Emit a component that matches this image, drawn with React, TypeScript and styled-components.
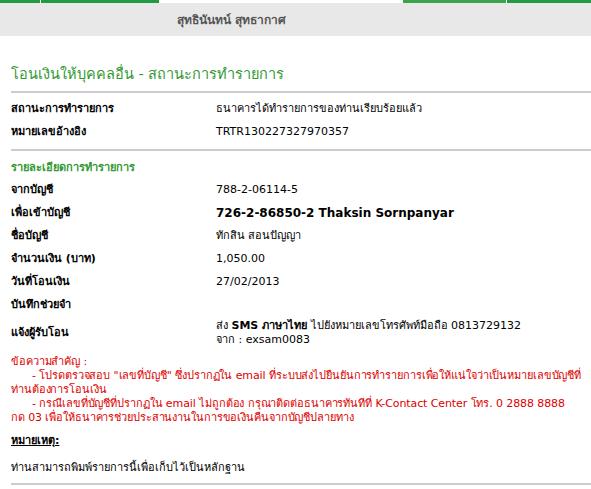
import React from 'react';
import styled, { createGlobalStyle } from 'styled-components';

const GlobalStyle = createGlobalStyle`
  html, body {
    margin: 0;
    padding: 0;
    background: #fff;
  }
  body {
    font-family: Tahoma, "DejaVu Sans", "Noto Sans", sans-serif;
    font-size: 11px;
    line-height: 14px;
    color: #000;
  }
`;

const TopStrip = styled.div`
  display: flex;
  height: 3px;
`;

const Seg = styled.div<{ $w: number; $color: string; $gap?: boolean }>`
  width: ${(p) => p.$w}px;
  flex: ${(p) => (p.$w ? 'none' : '1')};
  background: ${(p) => p.$color};
  margin-right: ${(p) => (p.$gap ? '1px' : '0')};
`;

const NameBar = styled.div`
  height: 33px;
  background: #e8e8e8;
  display: flex;
  align-items: center;
  padding-left: 177px;
  color: #555;
  font-weight: bold;
  font-size: 12px;
`;

const Content = styled.div`
  padding: 0 0 0 11px;
`;

const Heading = styled.h1`
  margin: 28px 0 0;
  color: #339933;
  font-size: 14.5px;
  font-weight: normal;
  line-height: 20px;
`;

const Rule = styled.hr<{ $top: number }>`
  border: none;
  height: 2px;
  background: #cccccc;
  margin: ${(p) => p.$top}px 0 0;
`;

const InfoGrid = styled.div<{ $top: number }>`
  display: grid;
  grid-template-columns: 205px 1fr;
  grid-auto-rows: minmax(23px, auto);
  align-items: center;
  padding-top: ${(p) => p.$top}px;
`;

const Label = styled.div`
  font-weight: bold;
`;

const Value = styled.div<{ $bold?: boolean }>`
  font-weight: ${(p) => (p.$bold ? 'bold' : 'normal')};
  font-size: ${(p) => (p.$bold ? '12px' : '11px')};
  line-height: 14px;
  padding: 3px 0;
`;

const SectionTitle = styled.div`
  color: #339933;
  font-weight: bold;
  margin-top: 9px;
  line-height: 16px;
`;

const Notice = styled.div`
  color: #dd0000;
  margin-top: 5px;
  letter-spacing: -0.1px;
`;

const Bullet = styled.div`
  text-indent: 21px;
`;

const NoteTitle = styled.div`
  margin-top: 9px;
  font-weight: bold;
  text-decoration: underline;
`;

const NoteText = styled.div`
  margin-top: 13px;
`;

const rows1 = [
  { label: 'สถานะการทำรายการ', value: 'ธนาคารได้ทำรายการของท่านเรียบร้อยแล้ว' },
  { label: 'หมายเลขอ้างอิง', value: 'TRTR130227327970357' },
];

const rows2: { label: string; value: React.ReactNode; bold?: boolean }[] = [
  { label: 'จากบัญชี', value: '788-2-06114-5' },
  { label: 'เพื่อเข้าบัญชี', value: '726-2-86850-2 Thaksin Sornpanyar', bold: true },
  { label: 'ชื่อบัญชี', value: 'ทักสิน สอนปัญญา' },
  { label: 'จำนวนเงิน (บาท)', value: '1,050.00' },
  { label: 'วันที่โอนเงิน', value: '27/02/2013' },
  { label: 'บันทึกช่วยจำ', value: '' },
  {
    label: 'แจ้งผู้รับโอน',
    value: (
      <>
        ส่ง <b>SMS ภาษาไทย</b> ไปยังหมายเลขโทรศัพท์มือถือ 0813729132
        <br />
        จาก : exsam0083
      </>
    ),
  },
];

export default function App() {
  return (
    <>
      <GlobalStyle />
      <TopStrip>
        <Seg $w={40} $color="#229944" $gap />
        <Seg $w={118} $color="#229944" />
        <Seg $w={244} $color="#ffffff" />
        <Seg $w={103} $color="#3ca34c" $gap />
        <Seg $w={0} $color="#229944" />
      </TopStrip>
      <NameBar>สุทธินันทน์ สุทธากาศ</NameBar>
      <Content>
        <Heading>โอนเงินให้บุคคลอื่น - สถานะการทำรายการ</Heading>
        <Rule $top={7} />
        <InfoGrid $top={4}>
          {rows1.map((r) => (
            <React.Fragment key={r.label}>
              <Label>{r.label}</Label>
              <Value>{r.value}</Value>
            </React.Fragment>
          ))}
        </InfoGrid>
        <Rule $top={6} />
        <SectionTitle>รายละเอียดการทำรายการ</SectionTitle>
        <InfoGrid $top={2}>
          {rows2.map((r) => (
            <React.Fragment key={r.label}>
              <Label>{r.label}</Label>
              <Value $bold={r.bold}>{r.value}</Value>
            </React.Fragment>
          ))}
        </InfoGrid>
        <Notice>
          ข้อความสำคัญ :
          <Bullet>
            - โปรดตรวจสอบ "เลขที่บัญชี" ซึ่งปรากฏใน email ที่ระบบส่งไปยืนยันการทำรายการเพื่อให้แน่ใจว่าเป็นหมายเลขบัญชีที่
            <br />
            ท่านต้องการโอนเงิน
          </Bullet>
          <Bullet>
            - กรณีเลขที่บัญชีที่ปรากฏใน email ไม่ถูกต้อง กรุณาติดต่อธนาคารทันทีที่ K-Contact Center โทร. 0 2888 8888
            <br />
            กด 03 เพื่อให้ธนาคารช่วยประสานงานในการขอเงินคืนจากบัญชีปลายทาง
          </Bullet>
        </Notice>
        <NoteTitle>หมายเหตุ:</NoteTitle>
        <NoteText>ท่านสามารถพิมพ์รายการนี้เพื่อเก็บไว้เป็นหลักฐาน</NoteText>
        <Rule $top={8} />
      </Content>
    </>
  );
}
